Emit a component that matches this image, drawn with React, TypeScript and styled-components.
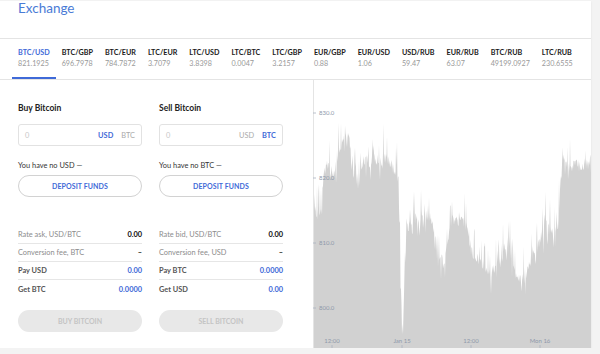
import React from 'react';
import styled, { createGlobalStyle } from 'styled-components';

const GlobalStyle = createGlobalStyle`
  html, body { margin: 0; padding: 0; background: #f3f3f3; }
  body { font-family: Lato, "Open Sans", sans-serif; color: #222; }
  * { box-sizing: border-box; }
`;

const BLUE = '#3f6ad8';

const Card = styled.div`
  width: 591px;
  background: #fff;
  box-shadow: 0 1px 2px rgba(0, 0, 0, 0.08);
`;

const Header = styled.header`
  height: 38px;
  border-bottom: 1px solid #e4e4e4;
  padding-left: 18px;
`;

const Title = styled.h1`
  margin: 1px 0 0;
  font-size: 13.5px;
  line-height: 14px;
  font-weight: 400;
  color: #4a7bd6;
`;

const Tabs = styled.nav`
  height: 41px;
  border-bottom: 1px solid #e4e4e4;
  display: flex;
  padding-left: 12px;
  white-space: nowrap;
  overflow: hidden;
`;

const Tab = styled.div<{ $active?: boolean }>`
  height: 40px;
  padding: 9px 6px 0;
  border-bottom: 2px solid ${p => (p.$active ? BLUE : 'transparent')};
  display: flex;
  flex-direction: column;
`;

const PairName = styled.span<{ $active?: boolean }>`
  font-size: 7.2px;
  line-height: 10px;
  font-weight: 700;
  color: ${p => (p.$active ? BLUE : '#1a1a1a')};
`;

const PairValue = styled.span`
  margin-top: 1px;
  font-size: 7.2px;
  line-height: 10px;
  color: #999;
`;

const Main = styled.div`
  display: flex;
  height: 268px;
`;

const Forms = styled.div`
  width: 313px;
  padding: 22px 29px 0 18px;
  display: flex;
  gap: 17px;
`;

const Column = styled.section`
  width: 124px;
  display: flex;
  flex-direction: column;
`;

const ColTitle = styled.h2`
  margin: 0;
  font-size: 8.5px;
  line-height: 12px;
  font-weight: 700;
  color: #222;
`;

const InputBox = styled.div`
  margin-top: 10px;
  height: 22px;
  border: 1px solid #e2e2e2;
  border-radius: 3px;
  display: flex;
  align-items: center;
  padding: 0 6px 0 6px;
  font-size: 7.4px;
`;

const Placeholder = styled.span`
  flex: 1;
  color: #c8c8c8;
`;

const Unit = styled.span<{ $active?: boolean }>`
  margin-left: 8px;
  color: ${p => (p.$active ? BLUE : '#aaa')};
  font-weight: ${p => (p.$active ? 700 : 400)};
`;

const Note = styled.div`
  margin-top: 15px;
  font-size: 7.4px;
  line-height: 10px;
  color: #333;
`;

const OutlineButton = styled.button`
  margin-top: 4px;
  height: 22px;
  border: 1px solid #d2d2d2;
  border-radius: 11px;
  background: #fff;
  color: ${BLUE};
  font-family: inherit;
  font-size: 7px;
  font-weight: 700;
  letter-spacing: 0.1px;
  padding: 0;
`;

const Rows = styled.div`
  margin-top: 29px;
  display: flex;
  flex-direction: column;
`;

const Row = styled.div`
  height: 18px;
  display: flex;
  align-items: center;
  justify-content: space-between;
  font-size: 7.4px;
  border-bottom: 1px solid #e6e6e6;
  &:last-child { border-bottom: none; }
`;

const RowLabel = styled.span<{ $strong?: boolean }>`
  color: ${p => (p.$strong ? '#555' : '#8c8c8c')};
  font-weight: ${p => (p.$strong ? 700 : 400)};
`;

const RowValue = styled.span<{ $blue?: boolean }>`
  color: ${p => (p.$blue ? BLUE : '#111')};
  font-weight: 700;
`;

const ActionButton = styled.button`
  margin-top: 12px;
  height: 22px;
  border: none;
  border-radius: 11px;
  background: #e8e8e8;
  color: #c4c4c4;
  font-family: inherit;
  font-size: 7px;
  font-weight: 700;
  padding: 0;
`;

const ChartWrap = styled.div`
  flex: 1;
  height: 268px;
`;

const pairs = [
  ['BTC/USD', '821.1925'],
  ['BTC/GBP', '696.7978'],
  ['BTC/EUR', '784.7872'],
  ['LTC/EUR', '3.7079'],
  ['LTC/USD', '3.8398'],
  ['LTC/BTC', '0.0047'],
  ['LTC/GBP', '3.2157'],
  ['EUR/GBP', '0.88'],
  ['EUR/USD', '1.06'],
  ['USD/RUB', '59.47'],
  ['EUR/RUB', '63.07'],
  ['BTC/RUB', '49199.0927'],
  ['LTC/RUB', '230.6555'],
];

const anchors: [number, number][] = [
  [313, 205], [316, 210], [319, 216], [322, 204], [324, 172], [327, 162], [330, 166],
  [333, 172], [336, 164], [340, 148], [344, 138], [348, 136], [350, 144], [352, 170],
  [355, 178], [358, 182], [361, 166], [364, 158], [367, 156], [370, 166], [373, 154],
  [376, 158], [380, 160], [384, 156], [388, 158], [392, 166], [395, 170], [397, 166],
  [399, 205], [401, 285], [403, 338], [405, 245], [407, 228], [411, 221], [416, 218],
  [420, 224], [425, 214], [430, 218], [435, 234], [440, 257], [445, 262], [448, 234],
  [452, 218], [458, 222], [462, 216], [467, 226], [472, 251], [478, 257], [485, 267],
  [490, 272], [495, 268], [500, 263], [505, 246], [510, 251], [515, 272], [520, 279],
  [526, 276], [530, 263], [535, 251], [540, 241], [545, 221], [550, 226], [555, 233],
  [558, 220], [561, 178], [563, 156], [566, 162], [570, 166], [575, 162], [580, 166],
  [585, 164], [591, 161],
];

function buildPath(): string {
  let seed = 12345;
  const rnd = () => {
    seed = (seed * 16807) % 2147483647;
    return (seed - 1) / 2147483646;
  };
  const pts: string[] = [];
  for (let x = 0; x <= 278; x += 0.5) {
    const ax = x + 313;
    let i = 0;
    while (i < anchors.length - 2 && anchors[i + 1][0] < ax) i++;
    const [x0, y0] = anchors[i];
    const [x1, y1] = anchors[i + 1];
    const t = Math.min(1, Math.max(0, (ax - x0) / (x1 - x0)));
    let y = y0 + (y1 - y0) * t - 79;
    y += (rnd() - 0.5) * 12;
    if (rnd() < 0.22) y -= 6 + rnd() * 24;
    if (rnd() < 0.12) y += 6 + rnd() * 16;
    y = Math.max(20, Math.min(267, y));
    pts.push(`${x.toFixed(1)},${y.toFixed(1)}`);
  }
  return `M0,268 L${pts.join(' L')} L278,268 Z`;
}

const chartPath = buildPath();

const yLabels = [
  { y: 33, t: '830.0' },
  { y: 98, t: '820.0' },
  { y: 163, t: '810.0' },
  { y: 228, t: '800.0' },
];

const xLabels = [
  { x: 19, t: '12:00' },
  { x: 89, t: 'Jan 15' },
  { x: 158, t: '12:00' },
  { x: 227, t: 'Mon 16' },
];

const Chart: React.FC = () => (
  <svg width="278" height="268" viewBox="0 0 278 268">
    <path d={chartPath} fill="#d1d1d1" />
    <line x1="0.5" y1="0" x2="0.5" y2="268" stroke="#e4e4e4" />
    {yLabels.map(l => (
      <g key={l.t}>
        <line x1="0" y1={l.y} x2="3" y2={l.y} stroke="#aab2c0" strokeWidth="0.8" />
        <text x="6" y={l.y + 2} fontSize="6" fill="#8f99aa" fontFamily="Lato, sans-serif">
          {l.t}
        </text>
      </g>
    ))}
    {xLabels.map(l => (
      <g key={l.x}>
        <text x={l.x} y="263" fontSize="6" fill="#8f99aa" textAnchor="middle" fontFamily="Lato, sans-serif">
          {l.t}
        </text>
        <line x1={l.x} y1="265" x2={l.x} y2="268" stroke="#aab2c0" strokeWidth="0.8" />
      </g>
    ))}
  </svg>
);

type Side = {
  title: string;
  active: 'USD' | 'BTC';
  note: string;
  rows: { label: string; value: string; strong?: boolean; blue?: boolean }[];
  action: string;
};

const sides: Side[] = [
  {
    title: 'Buy Bitcoin',
    active: 'USD',
    note: 'You have no USD —',
    rows: [
      { label: 'Rate ask, USD/BTC', value: '0.00' },
      { label: 'Conversion fee, BTC', value: '–' },
      { label: 'Pay USD', value: '0.00', strong: true, blue: true },
      { label: 'Get BTC', value: '0.0000', strong: true, blue: true },
    ],
    action: 'BUY BITCOIN',
  },
  {
    title: 'Sell Bitcoin',
    active: 'BTC',
    note: 'You have no BTC —',
    rows: [
      { label: 'Rate bid, USD/BTC', value: '0.00' },
      { label: 'Conversion fee, USD', value: '–' },
      { label: 'Pay BTC', value: '0.0000', strong: true, blue: true },
      { label: 'Get USD', value: '0.00', strong: true, blue: true },
    ],
    action: 'SELL BITCOIN',
  },
];

export default function App() {
  return (
    <>
      <GlobalStyle />
      <Card>
        <Header>
          <Title>Exchange</Title>
        </Header>
        <Tabs>
          {pairs.map(([name, value], i) => (
            <Tab key={name} $active={i === 0}>
              <PairName $active={i === 0}>{name}</PairName>
              <PairValue>{value}</PairValue>
            </Tab>
          ))}
        </Tabs>
        <Main>
          <Forms>
            {sides.map(s => (
              <Column key={s.title}>
                <ColTitle>{s.title}</ColTitle>
                <InputBox>
                  <Placeholder>0</Placeholder>
                  <Unit $active={s.active === 'USD'}>USD</Unit>
                  <Unit $active={s.active === 'BTC'}>BTC</Unit>
                </InputBox>
                <Note>{s.note}</Note>
                <OutlineButton>DEPOSIT FUNDS</OutlineButton>
                <Rows>
                  {s.rows.map(r => (
                    <Row key={r.label}>
                      <RowLabel $strong={r.strong}>{r.label}</RowLabel>
                      <RowValue $blue={r.blue}>{r.value}</RowValue>
                    </Row>
                  ))}
                </Rows>
                <ActionButton>{s.action}</ActionButton>
              </Column>
            ))}
          </Forms>
          <ChartWrap>
            <Chart />
          </ChartWrap>
        </Main>
      </Card>
    </>
  );
}
